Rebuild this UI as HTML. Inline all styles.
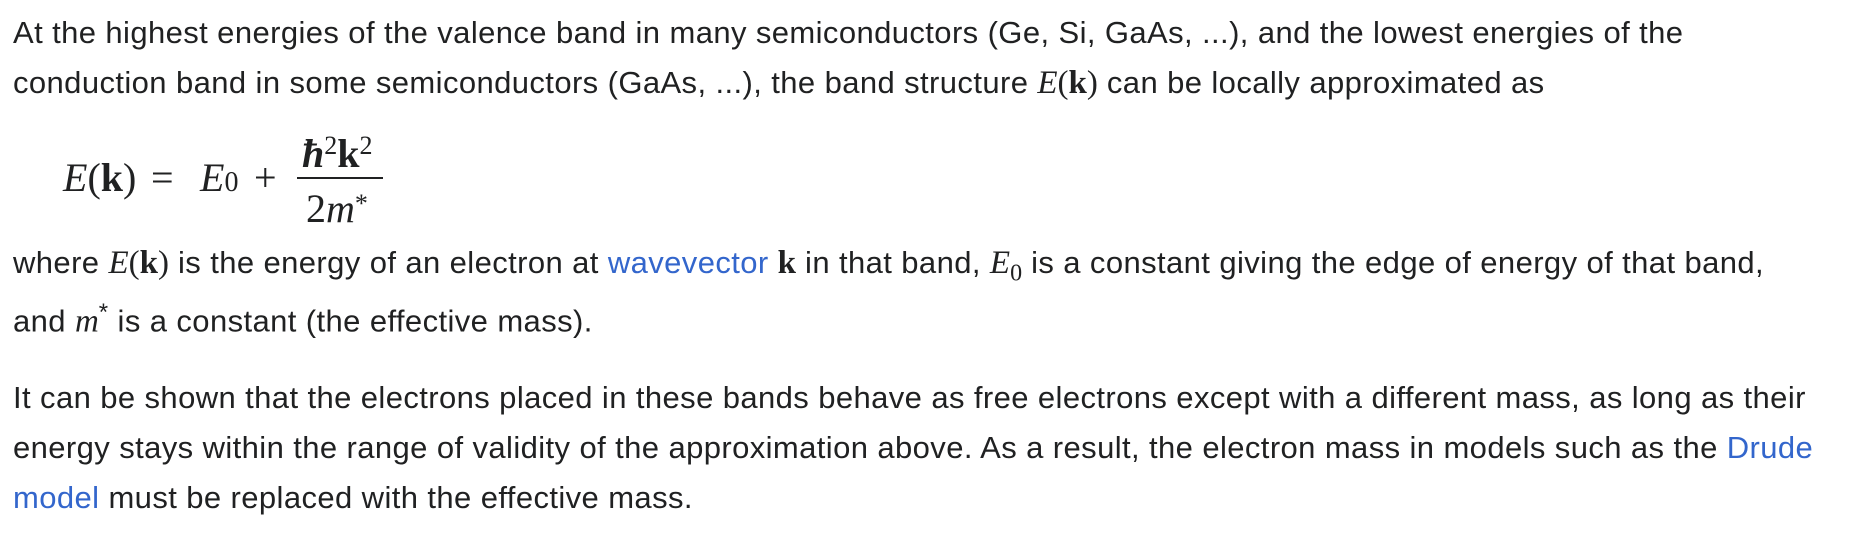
<!DOCTYPE html>
<html><head><meta charset="utf-8"><style>
html,body{margin:0;padding:0;background:#fff;width:1854px;height:548px;overflow:hidden}
.l{position:absolute;left:13px;white-space:nowrap;font-family:"Liberation Sans",Arial,sans-serif;font-size:31px;letter-spacing:0.4px;line-height:50px;color:#202122}
a{color:#3366cc;text-decoration:none}
.m{font-family:"Liberation Serif",serif;font-size:33px;letter-spacing:0}
.i{font-style:italic}
.b{font-weight:bold}
.f{position:absolute;font-family:"Liberation Serif",serif;font-size:40px;color:#202122;white-space:nowrap;line-height:40px}
</style></head><body>
<div class="l" style="top:8px">At the highest energies of the valence band in many semiconductors (Ge, Si, GaAs, ...), and the lowest energies of the</div>
<div class="l" style="top:58px">conduction band in some semiconductors (GaAs, ...), the band structure <span class="m"><span class="i">E</span>(<span class="b">k</span>)</span> can be locally approximated as</div>

<div class="f" style="left:63px;top:158px"><span class="i">E</span>(<span class="b">k</span>)</div>
<div class="f" style="left:151px;top:158px">=</div>
<div class="f" style="left:200px;top:158px"><span class="i">E</span><span style="font-size:28px">0</span></div>
<div class="f" style="left:254px;top:158px">+</div>
<div style="position:absolute;left:297px;top:177px;width:86px;height:2px;background:#202122"></div>
<div class="f" style="left:302px;top:126px"><span class="i b">ħ</span><sup style="font-size:26px;vertical-align:13px">2</sup><span class="b">k</span><sup style="font-size:26px;vertical-align:13px">2</sup></div>
<div class="f" style="left:306px;top:184px">2<span class="i">m</span><sup style="font-size:26px;vertical-align:10px">*</sup></div>

<div class="l" style="top:238px">where <span class="m"><span class="i">E</span>(<span class="b">k</span>)</span> is the energy of an electron at <a>wavevector</a> <span class="m b">k</span> in that band, <span class="m"><span class="i">E</span><sub style="font-size:24px">0</sub></span> is a constant giving the edge of energy of that band,</div>
<div class="l" style="top:288px">and <span class="m i">m</span><sup style="font-size:24px">*</sup> is a constant (the effective mass).</div>
<div class="l" style="top:373px">It can be shown that the electrons placed in these bands behave as free electrons except with a different mass, as long as their</div>
<div class="l" style="top:423px">energy stays within the range of validity of the approximation above. As a result, the electron mass in models such as the <a>Drude</a></div>
<div class="l" style="top:473px"><a>model</a> must be replaced with the effective mass.</div>
</body></html>
